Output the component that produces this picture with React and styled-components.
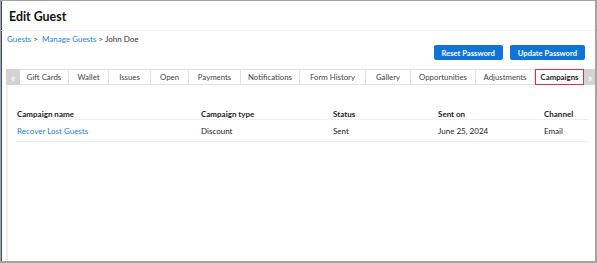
import React from 'react';
import styled, {createGlobalStyle} from 'styled-components';

const GlobalStyle = createGlobalStyle`
  html, body {
    margin: 0;
    padding: 0;
    background: #fff;
  }
  body {
    font-family: Lato, "Open Sans", sans-serif;
    color: #222;
    -webkit-font-smoothing: antialiased;
  }
`;

const Frame = styled.div`
  box-sizing: border-box;
  width: 597px;
  height: 263px;
  border: 1px solid #a3a3a3;
  border-bottom-width: 2px;
  border-right-width: 2px;
  box-shadow: inset 1px 0 0 #3f4d6b;
  display: flex;
  flex-direction: column;
  overflow: hidden;
`;

const Header = styled.div`
  height: 29px;
  display: flex;
  align-items: center;
  padding: 0 8px;
  border-bottom: 1px solid #eef0f5;
`;

const Title = styled.h1`
  margin: 0;
  padding-top: 2px;
  font-size: 12.4px;
  font-weight: 700;
  color: #111;
`;

const Crumbs = styled.div`
  padding: 2px 6px 0;
  font-size: 8px;
  line-height: 12px;
  color: #333;
`;

const Crumb = styled.a`
  color: #2b7fd1;
  text-decoration: none;
`;

const Actions = styled.div`
  display: flex;
  justify-content: flex-end;
  gap: 7px;
  padding: 0 10px 0 0;
`;

const Button = styled.button`
  height: 15px;
  padding: 0 8px;
  border: 0;
  border-radius: 2px;
  background: #0f74d5;
  color: #fff;
  font-family: inherit;
  font-size: 7.6px;
  font-weight: 700;
  cursor: pointer;
`;

const TabBar = styled.div`
  display: flex;
  margin: 9px 0 0 5px;
  height: 16px;
  box-sizing: border-box;
  border-top: 1px solid #e2e2e2;
  border-bottom: 1px solid #e2e2e2;
`;

const Arrow = styled.div`
  width: ${p => p.$w}px;
  flex: none;
  margin: -1px 0;
  display: flex;
  align-items: center;
  justify-content: center;
  background: #d3d3d3;
  color: #fff;
  font-size: 11px;
  line-height: 1;
`;

const Tab = styled.div`
  width: ${p => p.$w}px;
  flex: none;
  box-sizing: border-box;
  display: flex;
  align-items: center;
  justify-content: center;
  border-right: 1px solid #e2e2e2;
  font-size: 7.8px;
  color: #444;
  white-space: nowrap;

  &.active {
    margin: -1px 0;
    border: 1px solid #d8323b;
    font-weight: 700;
    color: #222;
  }
`;

const Panel = styled.div`
  flex: 1;
  margin-left: 5px;
  border-left: 2px solid #eeeeee;
  padding: 23px 8px 0 8px;
`;

const Table = styled.div`
  width: 572px;
`;

const Row = styled.div`
  display: grid;
  grid-template-columns: 184px 132px 105px 106px 1fr;
  align-items: center;
  height: ${p => p.$head ? 11 : 21}px;
  padding-left: 1px;
  border-bottom: 1px solid #eeeeee;
  font-size: 8px;
  font-weight: ${p => p.$head ? 700 : 400};
  color: #222;
`;

const Link = styled.a`
  color: #2b7fd1;
  text-decoration: none;
`;

const tabs = [
  ['Gift Cards', 49],
  ['Wallet', 40],
  ['Issues', 42],
  ['Open', 38],
  ['Payments', 52],
  ['Notifications', 59],
  ['Form History', 66],
  ['Gallery', 45],
  ['Opportunities', 65],
  ['Adjustments', 59],
];

const App = () => {
  return (
    <Frame>
      <GlobalStyle/>
      <Header>
        <Title>Edit Guest</Title>
      </Header>
      <Crumbs>
        <Crumb href="#">Guests</Crumb> &gt;&nbsp; <Crumb href="#">Manage Guests</Crumb> &gt; John Doe
      </Crumbs>
      <Actions>
        <Button>Reset Password</Button>
        <Button>Update Password</Button>
      </Actions>
      <TabBar>
        <Arrow $w={14}>«</Arrow>
        {tabs.map(([name, w]) => <Tab key={name} $w={w}>{name}</Tab>)}
        <Tab className="active" $w={49}>Campaigns</Tab>
        <Arrow $w={12}>»</Arrow>
      </TabBar>
      <Panel>
        <Table>
          <Row $head>
            <span>Campaign name</span>
            <span>Campaign type</span>
            <span>Status</span>
            <span>Sent on</span>
            <span>Channel</span>
          </Row>
          <Row>
            <Link href="#">Recover Lost Guests</Link>
            <span>Discount</span>
            <span>Sent</span>
            <span>June 25, 2024</span>
            <span>Email</span>
          </Row>
        </Table>
      </Panel>
    </Frame>
  );
};

export default App;
